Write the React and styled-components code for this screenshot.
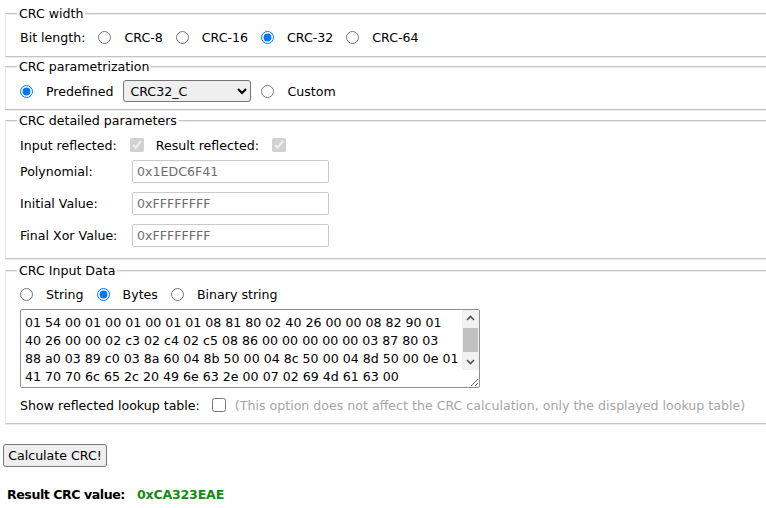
import React from "react";
import styled, { createGlobalStyle } from "styled-components";

const Global = createGlobalStyle`
  html, body { margin: 0; padding: 0; background: #fff; overflow: hidden; }
  body { font-family: "DejaVu Sans", Verdana, sans-serif; font-size: 12.6px; color: #000; }
`;

const Page = styled.div`
  width: 840px;
  padding-top: 6px;
`;

const Group = styled.fieldset`
  margin: 0 0 ${(p) => p.$mb || 2}px 5px;
  padding: ${(p) => p.$pad || "6px 13px 9px 14px"};
  border: 1px solid #c4c4c4;
  border-left-color: #e6e6e6;
  box-shadow: inset 0 1px 0 #ececec, 0 1px 0 #ececec;
  min-width: 0;
`;

const Legend = styled.legend`
  padding: 0 2px;
  margin-left: -3px;
  line-height: 15px;
  background: #fff;
`;

const Row = styled.div`
  display: flex;
  align-items: center;
  height: ${(p) => p.$h || 20}px;
  gap: ${(p) => p.$gap || 13}px;
  margin-top: ${(p) => p.$mt || 0}px;
`;

const Option = styled.label`
  display: flex;
  align-items: center;
  gap: ${(p) => p.$gap || 13}px;
  white-space: nowrap;
`;

const Radio = styled.input.attrs({ type: "radio" })`
  margin: 0;
  width: 13px;
  height: 13px;
  accent-color: #0075ff;
`;

const Check = styled.input.attrs({ type: "checkbox" })`
  margin: 0;
  width: 14px;
  height: 14px;
`;

const Select = styled.select`
  width: 128px;
  height: 22px;
  font-family: "DejaVu Sans", Verdana, sans-serif;
  font-size: 12.6px;
  border: 1px solid #767676;
  border-radius: 3px;
  background: #efefef;
  padding: 0 2px;
  color: #000;
`;

const FieldRow = styled.div`
  display: grid;
  grid-template-columns: 112px 197px;
  align-items: center;
  margin-top: ${(p) => p.$mt || 0}px;
`;

const TextField = styled.input`
  height: 23px;
  box-sizing: border-box;
  border: 1px solid #c9c9c9;
  border-radius: 2px;
  padding: 0 2px 0 4px;
  font-family: "DejaVu Sans", Verdana, sans-serif;
  font-size: 12.6px;
  color: #6d6d6d;
  background: #fff;
  width: 197px;
`;

const AreaWrap = styled.div`
  position: relative;
  width: 460px;
  margin-top: 5px;
`;

const DataArea = styled.textarea`
  display: block;
  box-sizing: border-box;
  width: 460px;
  height: 79px;
  margin: 0;
  padding: 4px 20px 2px 4px;
  border: 1px solid #8f8f8f;
  border-radius: 2px;
  font-family: "DejaVu Sans", Verdana, sans-serif;
  font-size: 12.6px;
  line-height: 18px;
  color: #000;
  overflow: hidden;
  resize: both;
  white-space: pre;
`;

const ScrollTrack = styled.div`
  position: absolute;
  top: 1px;
  right: 1px;
  width: 17px;
  height: 60px;
  background: #f1f1f1;
  display: flex;
  flex-direction: column;
  align-items: center;
`;

const Arrow = styled.div`
  height: 17px;
  width: 17px;
  display: flex;
  align-items: center;
  justify-content: center;
`;

const Thumb = styled.div`
  width: 15px;
  height: 25px;
  background: #c1c1c1;
  margin: 1px 0;
`;

const Hint = styled.span`
  color: #a6a6a6;
  white-space: nowrap;
`;

const Button = styled.button`
  margin: 18px 0 0 3px;
  height: 23px;
  width: 104px;
  padding: 0;
  font-family: "DejaVu Sans", Verdana, sans-serif;
  font-size: 12.6px;
  color: #000;
  background: #efefef;
  border: 1px solid #767676;
  border-radius: 3px;
`;

const Result = styled.div`
  display: flex;
  gap: 12px;
  margin: 20px 0 0 7px;
  font-weight: bold;
  line-height: 15px;
  letter-spacing: -0.45px;
`;

const Value = styled.span`
  color: #138a13;
  letter-spacing: -0.2px;
`;

const Chevron = ({ up }) => (
  <svg width="9" height="6" viewBox="0 0 9 6">
    <path
      d={up ? "M1 5 L4.5 1.5 L8 5" : "M1 1 L4.5 4.5 L8 1"}
      fill="none"
      stroke="#505050"
      strokeWidth="1.6"
    />
  </svg>
);

const data =
  "01 54 00 01 00 01 00 01 01 08 81 80 02 40 26 00 00 08 82 90 01\n40 26 00 00 02 c3 02 c4 02 c5 08 86 00 00 00 00 00 03 87 80 03\n88 a0 03 89 c0 03 8a 60 04 8b 50 00 04 8c 50 00 04 8d 50 00 0e 01\n41 70 70 6c 65 2c 20 49 6e 63 2e 00 07 02 69 4d 61 63 00";

export default function App() {
  return (
    <Page>
      <Global />
      <Group>
        <Legend>CRC width</Legend>
        <Row>
          <span>Bit length:</span>
          <Option><Radio name="w" />CRC-8</Option>
          <Option><Radio name="w" />CRC-16</Option>
          <Option><Radio name="w" defaultChecked />CRC-32</Option>
          <Option><Radio name="w" />CRC-64</Option>
        </Row>
      </Group>
      <Group $pad="6px 13px 7px 14px" $mb={3}>
        <Legend>CRC parametrization</Legend>
        <Row $h={22} $gap={10}>
          <Option><Radio name="p" defaultChecked />Predefined</Option>
          <Select defaultValue="CRC32_C">
            <option>CRC32_C</option>
          </Select>
          <Option><Radio name="p" />Custom</Option>
        </Row>
      </Group>
      <Group $pad="7px 13px 11px 14px" $mb={4}>
        <Legend>CRC detailed parameters</Legend>
        <Row $gap={12}>
          <Option><span>Input reflected:</span><Check defaultChecked disabled /></Option>
          <Option><span>Result reflected:</span><Check defaultChecked disabled /></Option>
        </Row>
        <FieldRow $mt={5}>
          <span>Polynomial:</span>
          <TextField readOnly value="0x1EDC6F41" />
        </FieldRow>
        <FieldRow $mt={9}>
          <span>Initial Value:</span>
          <TextField readOnly value="0xFFFFFFFF" />
        </FieldRow>
        <FieldRow $mt={9}>
          <span>Final Xor Value:</span>
          <TextField readOnly value="0xFFFFFFFF" />
        </FieldRow>
      </Group>
      <Group $pad="6px 13px 8px 14px">
        <Legend>CRC Input Data</Legend>
        <Row>
          <Option><Radio name="d" />String</Option>
          <Option><Radio name="d" defaultChecked />Bytes</Option>
          <Option><Radio name="d" />Binary string</Option>
        </Row>
        <AreaWrap>
          <DataArea defaultValue={data} spellCheck={false} />
          <ScrollTrack>
            <Arrow><Chevron up /></Arrow>
            <Thumb />
            <Arrow><Chevron /></Arrow>
          </ScrollTrack>
        </AreaWrap>
        <Row $mt={7} $gap={9}>
          <Option $gap={12}><span>Show reflected lookup table:</span><Check /></Option>
          <Hint>(This option does not affect the CRC calculation, only the displayed lookup table)</Hint>
        </Row>
      </Group>
      <Button>Calculate CRC!</Button>
      <Result>
        <span>Result CRC value:</span>
        <Value>0xCA323EAE</Value>
      </Result>
    </Page>
  );
}
